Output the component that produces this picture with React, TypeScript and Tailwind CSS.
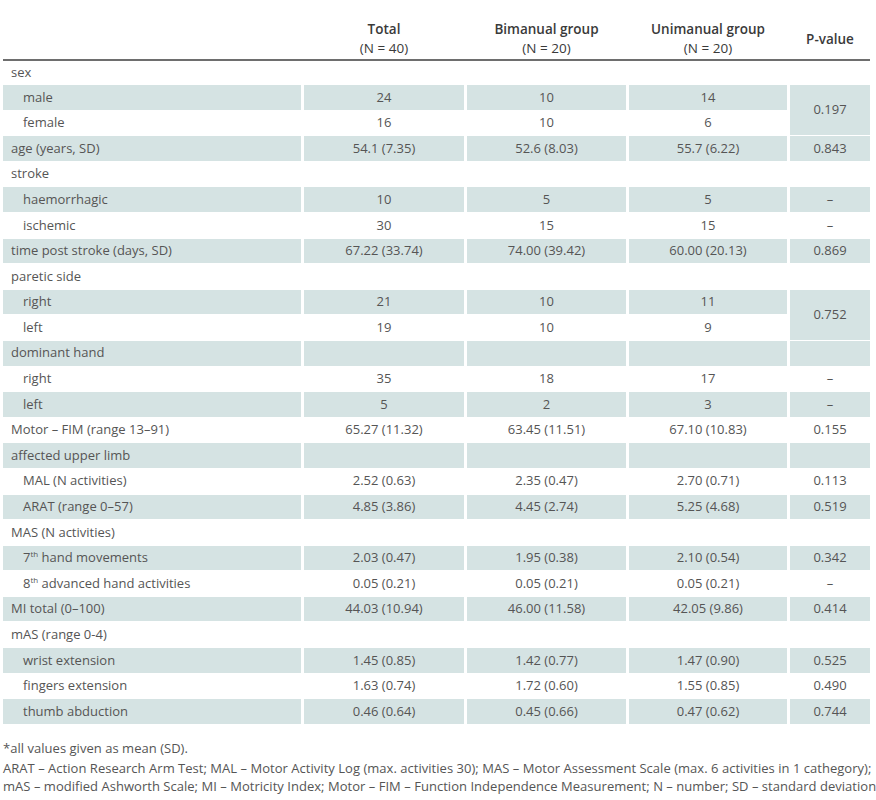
import React from "react";

type Row = {
  label: React.ReactNode;
  indent?: boolean;
  shaded: boolean;
  cells?: [string, string, string];
  p?: string;
  pSpan?: number;
  pSkip?: boolean;
};

const Sup = ({ n }: { n: string }) => (
  <>
    {n}
    <sup className="text-[8px] -top-[5px]">th</sup>
  </>
);

const rows: Row[] = [
  { label: "sex", shaded: false },
  { label: "male", indent: true, shaded: true, cells: ["24", "10", "14"], p: "0.197", pSpan: 2 },
  { label: "female", indent: true, shaded: false, cells: ["16", "10", "6"], pSkip: true },
  { label: "age (years, SD)", shaded: true, cells: ["54.1 (7.35)", "52.6 (8.03)", "55.7 (6.22)"], p: "0.843" },
  { label: "stroke", shaded: false },
  { label: "haemorrhagic", indent: true, shaded: true, cells: ["10", "5", "5"], p: "–" },
  { label: "ischemic", indent: true, shaded: false, cells: ["30", "15", "15"], p: "–" },
  { label: "time post stroke (days, SD)", shaded: true, cells: ["67.22 (33.74)", "74.00 (39.42)", "60.00 (20.13)"], p: "0.869" },
  { label: "paretic side", shaded: false },
  { label: "right", indent: true, shaded: true, cells: ["21", "10", "11"], p: "0.752", pSpan: 2 },
  { label: "left", indent: true, shaded: false, cells: ["19", "10", "9"], pSkip: true },
  { label: "dominant hand", shaded: true, cells: ["", "", ""], p: "" },
  { label: "right", indent: true, shaded: false, cells: ["35", "18", "17"], p: "–" },
  { label: "left", indent: true, shaded: true, cells: ["5", "2", "3"], p: "–" },
  { label: "Motor – FIM (range 13–91)", shaded: false, cells: ["65.27 (11.32)", "63.45 (11.51)", "67.10 (10.83)"], p: "0.155" },
  { label: "affected upper limb", shaded: true, cells: ["", "", ""], p: "" },
  { label: "MAL (N activities)", indent: true, shaded: false, cells: ["2.52 (0.63)", "2.35 (0.47)", "2.70 (0.71)"], p: "0.113" },
  { label: "ARAT (range 0–57)", indent: true, shaded: true, cells: ["4.85 (3.86)", "4.45 (2.74)", "5.25 (4.68)"], p: "0.519" },
  { label: "MAS (N activities)", shaded: false },
  { label: <><Sup n="7" /> hand movements</>, indent: true, shaded: true, cells: ["2.03 (0.47)", "1.95 (0.38)", "2.10 (0.54)"], p: "0.342" },
  { label: <><Sup n="8" /> advanced hand activities</>, indent: true, shaded: false, cells: ["0.05 (0.21)", "0.05 (0.21)", "0.05 (0.21)"], p: "–" },
  { label: "MI total (0–100)", shaded: true, cells: ["44.03 (10.94)", "46.00 (11.58)", "42.05 (9.86)"], p: "0.414" },
  { label: "mAS (range 0-4)", shaded: false },
  { label: "wrist extension", indent: true, shaded: true, cells: ["1.45 (0.85)", "1.42 (0.77)", "1.47 (0.90)"], p: "0.525" },
  { label: "fingers extension", indent: true, shaded: false, cells: ["1.63 (0.74)", "1.72 (0.60)", "1.55 (0.85)"], p: "0.490" },
  { label: "thumb abduction", indent: true, shaded: true, cells: ["0.46 (0.64)", "0.45 (0.66)", "0.47 (0.62)"], p: "0.744" },
];

export default function App() {
  return (
    <div
      className="w-[876px] h-[800px] bg-white text-[#555555] overflow-hidden"
      style={{ fontFamily: '"Open Sans", "Noto Sans", sans-serif' }}
    >
      <table className="table-fixed border-separate border-spacing-x-[3px] border-spacing-y-[1px] w-[873px] text-[13px]">
        <colgroup>
          <col className="w-[298px]" />
          <col className="w-[160px]" />
          <col className="w-[159px]" />
          <col className="w-[158px]" />
          <col className="w-[80px]" />
        </colgroup>
        <thead>
          <tr className="h-[57px]">
            <th className="p-0"></th>
            {[
              ["Total", "(N = 40)"],
              ["Bimanual group", "(N = 20)"],
              ["Unimanual group", "(N = 20)"],
            ].map(([a, b]) => (
              <th key={a} className="p-0 align-bottom text-center font-semibold text-[#3a3a3a] leading-[19px] text-[13.5px]">
                <div>{a}</div>
                <div className="font-normal">{b}</div>
              </th>
            ))}
            <th className="p-0 pb-[9px] align-bottom text-center font-semibold text-[#3a3a3a] leading-[19px] text-[13.5px]">
              P-value
            </th>
          </tr>
          <tr>
            <td colSpan={5} className="p-0 h-[1.5px] bg-[#6e6e6e]"></td>
          </tr>
        </thead>
        <tbody>
          {rows.map((r, i) => {
            const bg = r.shaded ? "bg-[#d5e3e3]" : "";
            const h = i === 0 ? "h-[22.5px]" : "h-[24.6px]";
            return (
              <tr key={i} className={h}>
                <td className={`p-0 ${r.indent ? "pl-[20px]" : "pl-[8px]"} ${bg} whitespace-nowrap align-middle`}>
                  {r.label}
                </td>
                {r.cells ? (
                  r.cells.map((c, j) => (
                    <td key={j} className={`p-0 text-center align-middle ${bg}`}>
                      {c}
                    </td>
                  ))
                ) : (
                  <>
                    <td className="p-0"></td>
                    <td className="p-0"></td>
                    <td className="p-0"></td>
                  </>
                )}
                {r.pSkip ? null : r.p !== undefined ? (
                  <td
                    rowSpan={r.pSpan ?? 1}
                    className={`p-0 text-center align-middle ${r.pSpan ? "bg-[#d5e3e3]" : bg}`}
                  >
                    {r.p}
                  </td>
                ) : (
                  <td className="p-0"></td>
                )}
              </tr>
            );
          })}
        </tbody>
      </table>
      <div className="pl-[3px] mt-[15px] text-[13px] leading-[17.5px] tracking-[0.03px]">
        <div className="mb-[3px]">*all values given as mean (SD).</div>
        <div className="whitespace-nowrap">
          ARAT – Action Research Arm Test; MAL – Motor Activity Log (max. activities 30); MAS – Motor Assessment Scale (max. 6 activities in 1 cathegory);
        </div>
        <div className="whitespace-nowrap">
          mAS – modified Ashworth Scale; MI – Motricity Index; Motor – FIM – Function Independence Measurement; N – number; SD – standard deviation
        </div>
      </div>
    </div>
  );
}
